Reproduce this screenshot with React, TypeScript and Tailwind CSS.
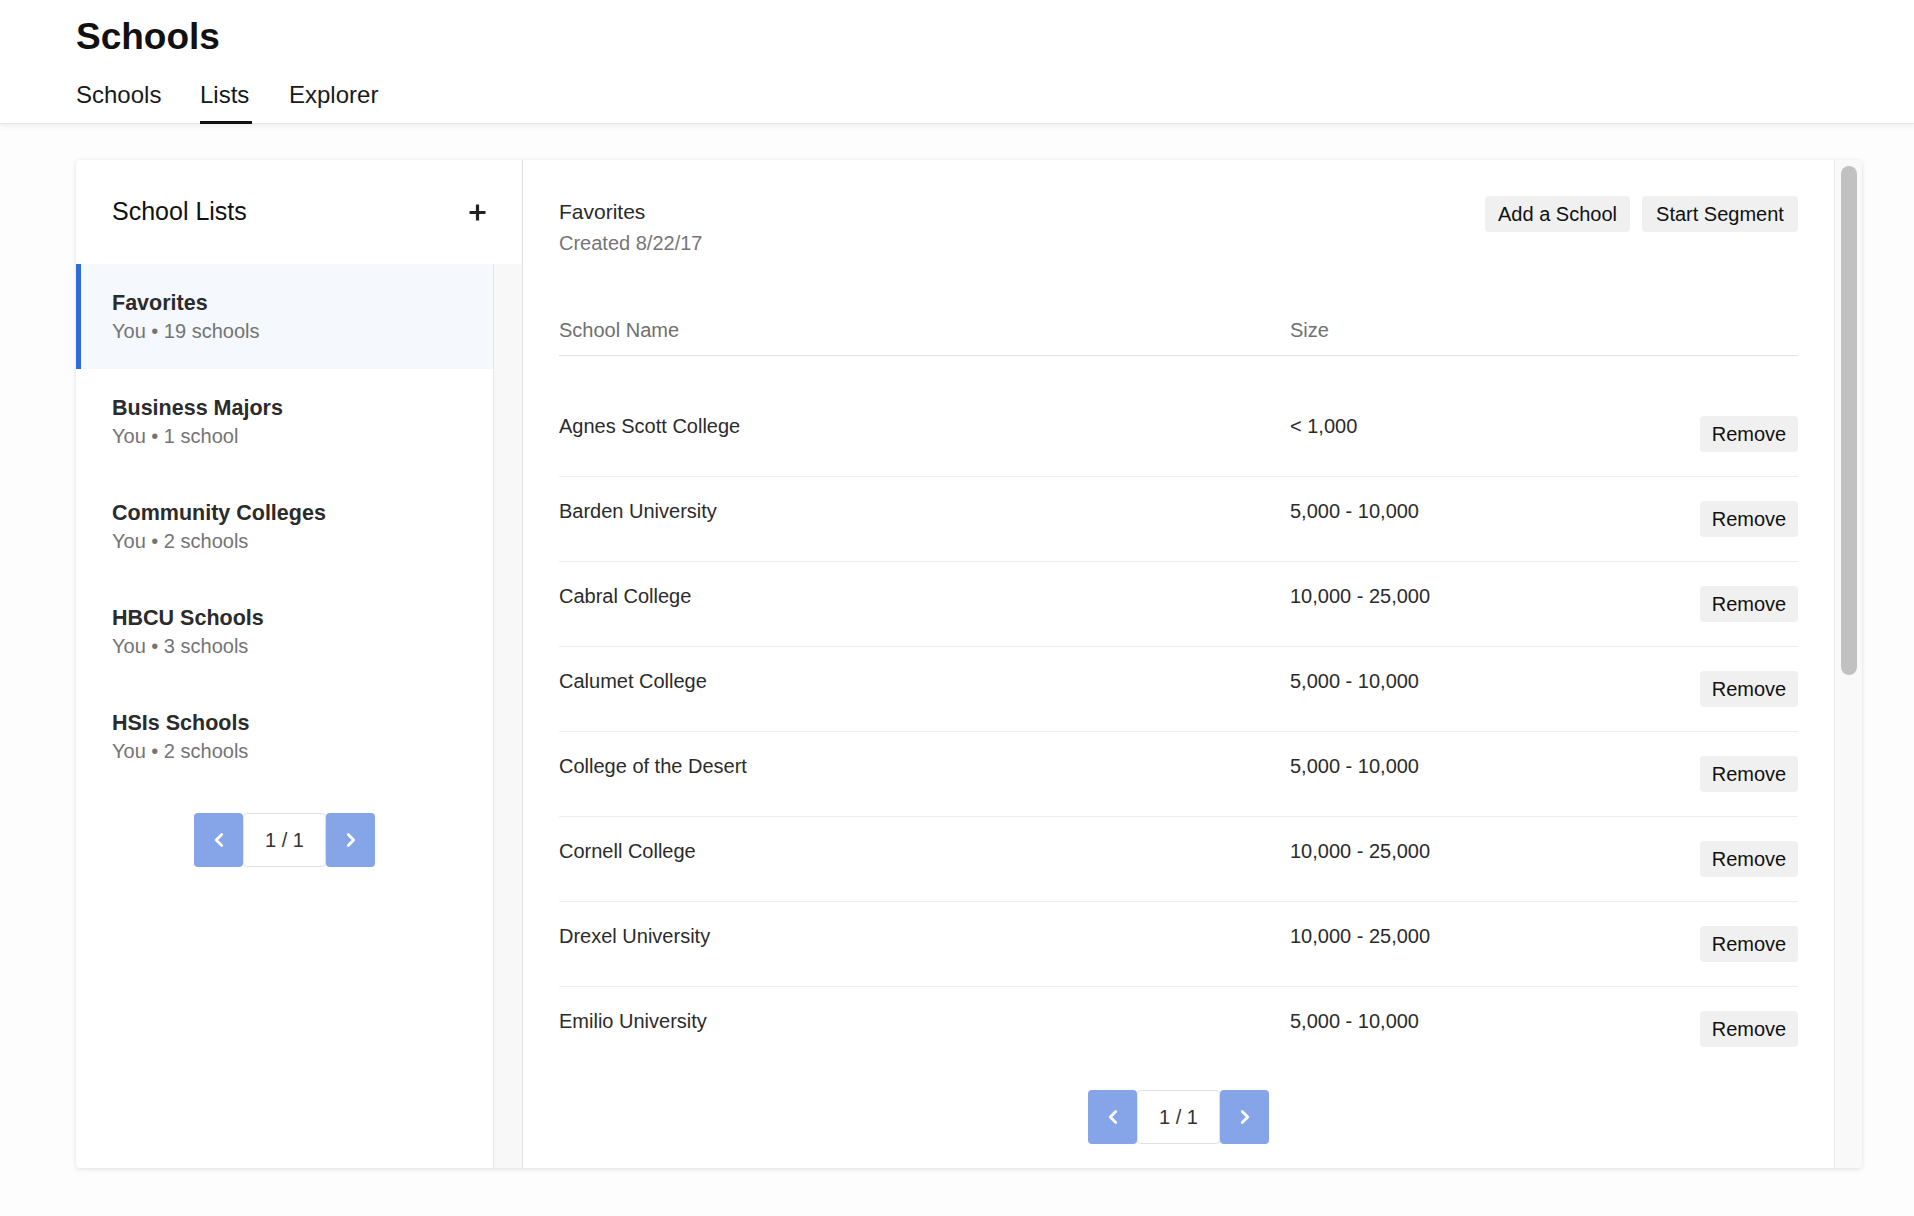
import { ChevronLeft, ChevronRight } from "lucide-react";

const LISTS = [
  { name: "Favorites", meta: "You • 19 schools", active: true },
  { name: "Business Majors", meta: "You • 1 school" },
  { name: "Community Colleges", meta: "You • 2 schools" },
  { name: "HBCU Schools", meta: "You • 3 schools" },
  { name: "HSIs Schools", meta: "You • 2 schools" },
];

const SCHOOLS = [
  { name: "Agnes Scott College", size: "< 1,000" },
  { name: "Barden University", size: "5,000 - 10,000" },
  { name: "Cabral College", size: "10,000 - 25,000" },
  { name: "Calumet College", size: "5,000 - 10,000" },
  { name: "College of the Desert", size: "5,000 - 10,000" },
  { name: "Cornell College", size: "10,000 - 25,000" },
  { name: "Drexel University", size: "10,000 - 25,000" },
  { name: "Emilio University", size: "5,000 - 10,000" },
];

function Pager() {
  return (
    <div className="flex items-stretch h-[54px]">
      <button className="w-[49px] rounded-[4px] bg-[#86a5e8] flex items-center justify-center text-white">
        <ChevronLeft size={22} strokeWidth={3} />
      </button>
      <div className="w-[83px] border border-[#e2e2e2] rounded-[4px] bg-white flex items-center justify-center text-[20px] text-[#333]">
        1 / 1
      </div>
      <button className="w-[49px] rounded-[4px] bg-[#86a5e8] flex items-center justify-center text-white">
        <ChevronRight size={22} strokeWidth={3} />
      </button>
    </div>
  );
}

export default function App() {
  return (
    <div
      className="min-h-screen w-full bg-[#fdfdfd] text-[#222]"
      style={{ fontFamily: '"Liberation Sans", Arial, sans-serif' }}
    >
      {/* Header */}
      <header className="bg-white h-[124px] px-[76px] border-b border-[#e6e6e6] shadow-[0_2px_6px_rgba(0,0,0,0.07)]">
        <h1 className="pt-[14px] text-[37px] leading-[46px] font-bold text-[#111]">
          Schools
        </h1>
        <nav className="flex gap-[37px] text-[24px] text-[#1a1a1a]">
          <span className="w-[87px] pt-[20px] pb-[11px] leading-[30px] border-b-[3px] border-transparent whitespace-nowrap">
            Schools
          </span>
          <span className="w-[52px] pt-[20px] pb-[11px] leading-[30px] border-b-[3px] border-[#111] text-[#0f1a1a]">
            Lists
          </span>
          <span className="pt-[20px] pb-[11px] leading-[30px] border-b-[3px] border-transparent">
            Explorer
          </span>
        </nav>
      </header>

      <main className="px-[76px] pt-[36px] pb-[48px]">
        <div className="w-[1786px] h-[1008px] flex bg-white rounded-[4px] shadow-[0_1px_5px_rgba(0,0,0,0.12)] overflow-hidden">
          {/* Left: school lists */}
          <aside className="w-[447px] flex flex-col border-r border-[#e2e2e2]">
            <div className="h-[104px] shrink-0 px-[36px] flex items-center justify-between">
              <span className="text-[25px] text-[#111]">School Lists</span>
              <svg width="17" height="17" viewBox="0 0 17 17" className="text-[#222]">
                <path d="M8.5 0.5v16M0.5 8.5h16" stroke="currentColor" strokeWidth="3.2" fill="none" />
              </svg>
            </div>
            <div className="flex flex-1">
              <div className="w-[417px] flex flex-col">
                {LISTS.map((l) => (
                  <div
                    key={l.name}
                    className={`h-[105px] flex flex-col justify-center ${
                      l.active
                        ? "bg-[#f5f8fd] border-l-[5px] border-[#2f6bd9] pl-[31px]"
                        : "pl-[36px]"
                    }`}
                  >
                    <span className="text-[21.5px] leading-[28px] font-bold text-[#2b2b2b]">
                      {l.name}
                    </span>
                    <span className="text-[20px] leading-[28px] text-[#747474]">
                      {l.meta}
                    </span>
                  </div>
                ))}
                <div className="mt-[24px] flex justify-center">
                  <Pager />
                </div>
              </div>
              <div className="flex-1 bg-[#f8f8f8] border-l border-[#e6e6e6]" />
            </div>
          </aside>

          {/* Right: list detail */}
          <section className="flex-1 flex flex-col px-[36px]">
            <div className="pt-[36px] flex items-start justify-between">
              <div className="mt-[2px]">
                <div className="text-[21px] leading-[28px] font-medium text-[#2a2a2a]">
                  Favorites
                </div>
                <div className="mt-[3px] text-[20px] leading-[28px] text-[#767676]">
                  Created 8/22/17
                </div>
              </div>
              <div className="flex gap-[12px]">
                <button className="h-[36px] w-[145px] rounded-[4px] bg-[#f0f0f0] text-[20px] font-medium text-[#111]">
                  Add a School
                </button>
                <button className="h-[36px] w-[156px] rounded-[4px] bg-[#f0f0f0] text-[20px] font-medium text-[#111]">
                  Start Segment
                </button>
              </div>
            </div>

            <div className="mt-[59px] flex border-b border-[#e0e0e0] pb-[11px] text-[20px] leading-[28px] text-[#707070]">
              <span className="w-[731px]">School Name</span>
              <span>Size</span>
            </div>

            <div className="mt-[36px] flex flex-col">
              {SCHOOLS.map((s, i) => (
                <div
                  key={s.name}
                  className={`h-[85px] flex items-start ${
                    i < SCHOOLS.length - 1 ? "border-b border-[#efefef]" : ""
                  }`}
                >
                  <span className="w-[731px] pt-[20px] text-[20px] leading-[28px] text-[#2b2b2b]">
                    {s.name}
                  </span>
                  <span className="flex-1 pt-[20px] text-[20px] leading-[28px] text-[#2b2b2b]">
                    {s.size}
                  </span>
                  <button className="mt-[24px] h-[36px] w-[98px] rounded-[4px] bg-[#f0f0f0] text-[20px] font-medium text-[#111]">
                    Remove
                  </button>
                </div>
              ))}
            </div>

            <div className="mt-[18px] flex justify-center">
              <Pager />
            </div>
          </section>

          {/* Right scrollbar */}
          <div className="w-[28px] shrink-0 bg-[#f9f9f9] border-l border-[#e8e8e8] pt-[6px] flex justify-center">
            <div className="w-[16px] h-[509px] rounded-full bg-[#c1c1c1]" />
          </div>
        </div>
      </main>
    </div>
  );
}
